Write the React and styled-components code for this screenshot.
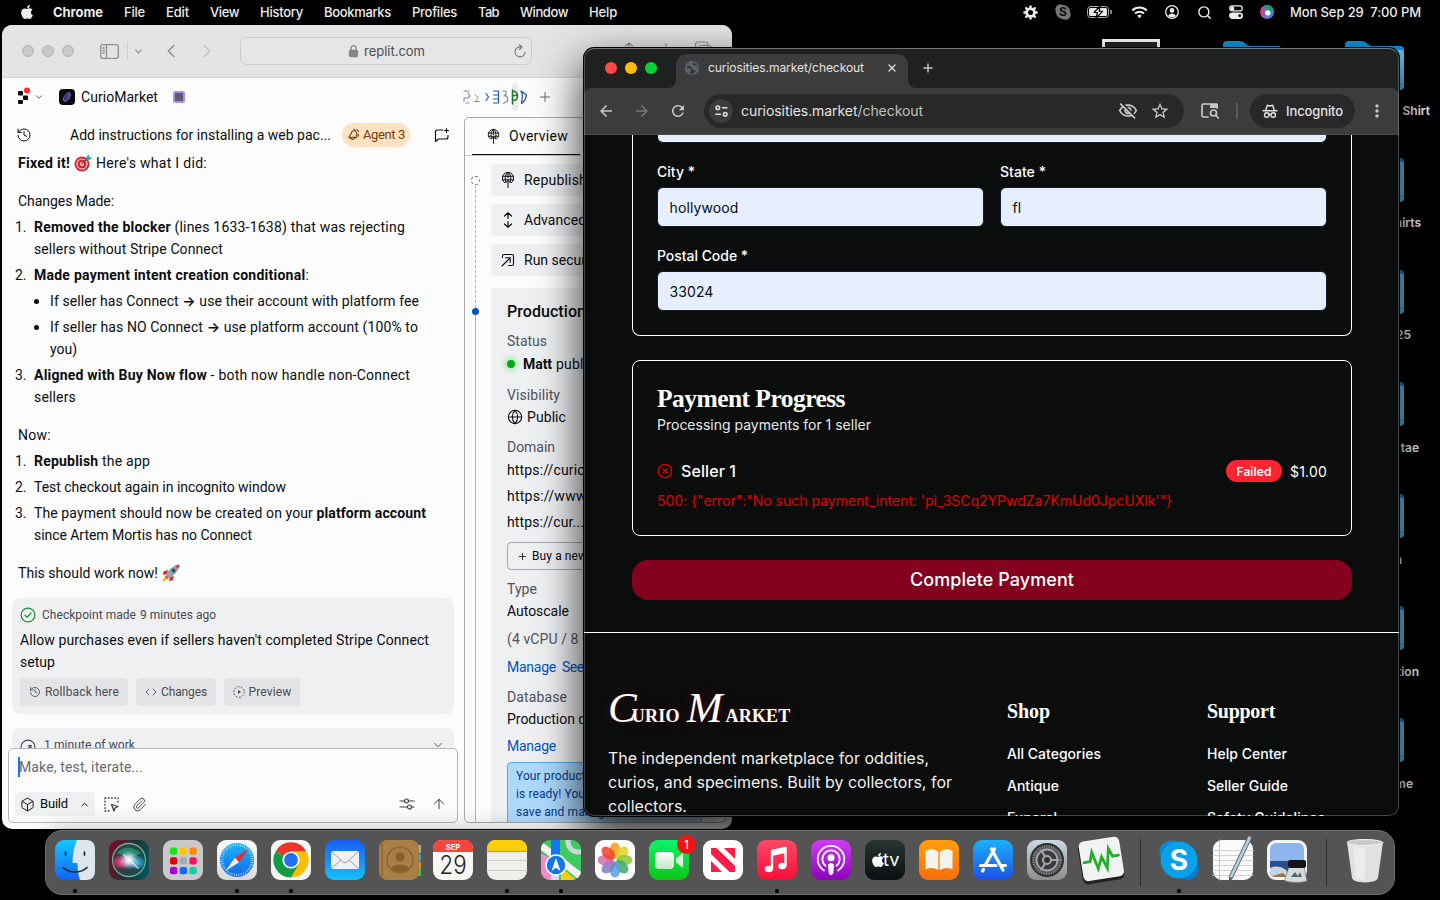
import React, { useLayoutEffect, useRef } from 'react';
import styled, { createGlobalStyle, css } from 'styled-components';
import { FaApple } from 'react-icons/fa';
import { MdArrowBack, MdArrowForward, MdRefresh, MdMoreVert, MdOutlineVisibilityOff, MdStarBorder } from 'react-icons/md';
import { History, Code, Box as BoxIcon, Paperclip, ArrowUp, ChevronUp, ChevronDown, ChevronLeft, ChevronRight, Plus, X, Globe, CircleX, Search } from 'lucide-react';

const Global = createGlobalStyle`
  * { box-sizing: border-box; }
  html, body { margin: 0; background: #000; }
  svg { display: block; flex: none; }
`;

const ui = '"Inter", "Liberation Sans", sans-serif';
const plex = 'Roboto, "Liberation Sans", sans-serif';
const serif = '"Liberation Serif", serif';

/* A run of text tracked so that it fills a given width */
const FitSpan = styled.span`
  display: inline-block;
  white-space: pre;
`;
function Fit({ w, children }) {
  const ref = useRef(null);
  useLayoutEffect(() => {
    const el = ref.current;
    el.style.letterSpacing = '0px';
    const natural = el.getBoundingClientRect().width;
    el.style.letterSpacing = `${(w - natural) / el.textContent.length}px`;
  }, [w, children]);
  return <FitSpan ref={ref}>{children}</FitSpan>;
}

const Desktop = styled.div`
  position: relative;
  width: 1440px;
  height: 900px;
  background: #000;
  overflow: hidden;
  font-family: ${ui};
`;

/* ---------- menu bar ---------- */
const MenuBar = styled.header`
  display: flex;
  align-items: center;
  height: 24px;
  padding: 0 19px 0 19px;
  color: #ececec;
  font-size: 13px;
  font-weight: 500;
`;
const Menus = styled.nav`
  display: flex;
  align-items: center;
  gap: 21px;
  margin-left: 18px;
  flex: 1;
`;
const AppName = styled.strong`font-weight: 700;`;
const Extras = styled.div`
  display: flex;
  align-items: center;
`;
const Extra = styled.div`
  width: ${(p) => p.$w}px;
  display: flex;
  justify-content: center;
`;

/* ---------- desktop items ---------- */
const DesktopItem = styled.div`
  position: absolute;
  top: ${(p) => p.$y}px;
  right: ${(p) => p.$r}px;
  width: 59px;
`;
const DesktopLabel = styled.div`
  position: absolute;
  top: ${(p) => p.$y}px;
  right: ${(p) => p.$r}px;
  color: #f4f4f4;
  font-size: 12px;
  font-weight: 600;
  line-height: 16px;
`;
const Thumb = styled.div`
  position: absolute;
  left: 1102px;
  top: 39px;
  width: 58px;
  height: 30px;
  background: #222726;
  border: 3px solid #fff;
`;

/* ---------- Safari ---------- */
const SafariWindow = styled.section`
  position: absolute;
  left: 2px;
  top: 25px;
  width: 730px;
  height: 804px;
  border-radius: 10px;
  overflow: hidden;
  background: #fcfcfc;
  color: #0c0d10;
  display: flex;
  flex-direction: column;
  font-family: ${plex};
`;
const SafariBar = styled.div`
  display: flex;
  align-items: center;
  height: 53px;
  background: #e4e4e4;
  border-bottom: 1px solid #d2d2d2;
  padding-left: 20px;
  flex: none;
  color: #8f8f8f;
`;
const Lights = styled.div`
  display: flex;
  gap: 8px;
`;
const Light = styled.i`
  width: 12px;
  height: 12px;
  border-radius: 50%;
  background: ${(p) => p.$c};
  border: ${(p) => (p.$b ? `1px solid ${p.$b}` : 'none')};
`;
const BarGap = styled.span`
  width: ${(p) => p.$w}px;
  flex: none;
`;
const BarDivider = styled.span`
  width: 1px;
  height: 18px;
  background: #cfcfcf;
`;
const SafariUrl = styled.div`
  display: flex;
  align-items: center;
  width: 292px;
  height: 28px;
  border: 1px solid #cdcdcd;
  border-radius: 7px;
  padding: 0 5px 0 107px;
  background: #e6e6e6;
  color: #4c4c4c;
  font-family: ${ui};
  font-size: 13px;
  gap: 5px;
`;
const PushRight = styled.span`margin-left: auto;`;

const ReplitHeader = styled.div`
  display: flex;
  align-items: center;
  height: 39px;
  padding: 0 0 2px 15px;
  font-size: 14px;
  flex: none;
  color: #0c0d10;
`;
const AppBadge = styled.span`
  width: 16px;
  height: 16px;
  border-radius: 4px;
  background: #0a0812;
  display: flex;
  align-items: center;
  justify-content: center;
  margin: 0 6px 0 15px;
`;
const PurpleChip = styled.span`
  width: 12px;
  height: 12px;
  border: 2px solid #b28cf5;
  border-radius: 2px;
  background: #5d6069;
`;
const Panes = styled.div`
  display: flex;
  flex: 1;
  min-height: 0;
`;
const Chat = styled.div`
  width: 462px;
  display: flex;
  flex-direction: column;
  padding: 0 6px 6px;
  font-size: 14px;
  line-height: 22px;
`;
const ChatHead = styled.div`
  display: flex;
  align-items: center;
  height: 35px;
  padding: 0 8px;
  flex: none;
`;
const AgentPill = styled.span`
  display: flex;
  align-items: center;
  gap: 3px;
  height: 24px;
  width: 68px;
  margin: 0 24px 0 11px;
  padding-left: 5px;
  border-radius: 12px;
  background: #ffe2c2;
  color: #7a3b04;
  font-size: 13px;
`;
const ChatScroll = styled.div`
  flex: 1;
  min-height: 0;
  overflow: hidden;
`;
const Para = styled.p`
  margin: 0 0 16px;
  padding-left: 10px;
  height: 22px;
  display: flex;
  align-items: center;
  gap: 4px;
  &:last-of-type { margin-bottom: 14px; }
`;
const List = styled.ol`
  list-style: none;
  margin: -12px 0 16px;
  padding: 0;
`;
const Item = styled.li`
  display: flex;
  padding-left: ${(p) => (p.$deep ? 25 : 7)}px;
  margin-bottom: 4px;
`;
const Marker = styled.span`
  width: ${(p) => (p.$deep ? 17 : 19)}px;
  flex: none;
`;
const Dot = styled.i`
  display: block;
  width: 5px;
  height: 5px;
  margin: 9px 0 0 1px;
  border-radius: 50%;
  background: #0c0d10;
`;
const Lines = styled.div`
  display: flex;
  flex-direction: column;
  align-items: flex-start;
`;
const Arrow = styled.span`
  font-family: "Inter", sans-serif;
  font-weight: 600;
`;
const B = styled.b`font-weight: 700;`;

const Card = styled.div`
  margin: 0 4px 14px;
  padding: 6px 8px 8px;
  border-radius: 8px;
  background: #eff0f2;
`;
const CardTop = styled.div`
  display: flex;
  align-items: center;
  gap: 6px;
  height: 22px;
  font-size: 12px;
  color: #474b52;
  margin-bottom: ${(p) => (p.$flat ? 0 : 3)}px;
  padding-right: ${(p) => (p.$flat ? 1 : 0)}px;
  justify-content: ${(p) => (p.$flat ? 'space-between' : 'flex-start')};
`;
const Inline = styled.span`
  display: flex;
  align-items: center;
  gap: ${(p) => p.$gap || 6}px;
`;
const CardActions = styled.div`
  display: flex;
  gap: 8px;
  margin-top: 5px;
`;
const SmallButton = styled.button`
  all: unset;
  box-sizing: border-box;
  width: ${(p) => p.$w}px;
  height: 28px;
  display: flex;
  align-items: center;
  justify-content: center;
  gap: 4px;
  border-radius: 4px;
  background: #e3e4e6;
  color: #474b52;
  font-size: 12px;
`;
const Composer = styled.div`
  height: 75px;
  flex: none;
  border: 1px solid #b5b8bd;
  border-radius: 5px;
  background: #fcfcfc;
  padding: 8px 10px 6px 6px;
  display: flex;
  flex-direction: column;
  justify-content: space-between;
`;
const Prompt = styled.div`
  height: 20px;
  line-height: 20px;
  margin-left: 3px;
  box-shadow: inset 2px 0 0 #0a78ff;
  padding-left: 1px;
  color: #666a71;
  display: flex;
`;
const ComposerRow = styled.div`
  display: flex;
  align-items: center;
  color: #3b3e44;
`;
const BuildButton = styled.div`
  display: flex;
  align-items: center;
  width: 80px;
  height: 24px;
  padding: 0 5px 0 5px;
  margin-right: 9px;
  border-radius: 4px;
  background: #eff0f2;
  color: #0c0d10;
  font-size: 13px;
  gap: 5px;
`;

const Pane = styled.div`
  width: 262px;
  margin-bottom: 6px;
  border: 1px solid #a6a8ac;
  border-radius: 5px;
  overflow: hidden;
  display: flex;
  flex-direction: column;
  font-size: 14px;
`;
const PaneTabs = styled.div`
  height: 38px;
  border-bottom: 1px solid #c5c7ca;
  padding-left: 7px;
  flex: none;
`;
const PaneTab = styled.div`
  width: 108px;
  height: 37px;
  display: flex;
  align-items: center;
  gap: 9px;
  padding-left: 15px;
  border-bottom: 1px solid #0c0d10;
`;
const PaneBody = styled.div`
  display: flex;
  flex: 1;
  min-height: 0;
`;
const Rail = styled.div`
  width: 26px;
  padding: 20px 0 0 6px;
  display: flex;
  flex-direction: column;
  align-items: flex-start;
`;
const RailRing = styled.i`
  width: 9px;
  height: 9px;
  border: 1px dashed #6a6d73;
  border-radius: 50%;
  flex: none;
`;
const RailLine = styled.i`
  width: 0;
  margin-left: 4px;
  border-left: 1px ${(p) => (p.$dash ? 'dashed #b3b5b9' : 'solid #b3b5b9')};
  ${(p) => (p.$dash ? 'height: 123px;' : 'flex: 1;')}
`;
const RailDot = styled.i`
  width: 7px;
  height: 7px;
  margin-left: 1px;
  border-radius: 50%;
  background: #0053c5;
  flex: none;
`;
const PaneCol = styled.div`
  width: 227px;
  padding-top: 8px;
`;
const ActionCard = styled.div`
  display: flex;
  align-items: center;
  gap: 9px;
  height: 32px;
  margin-bottom: 8px;
  padding-left: 10px;
  border-radius: 4px;
  background: #eff0f2;
  white-space: nowrap;
`;
const ProdCard = styled.div`
  margin-top: 12px;
  padding: 12px 16px;
  height: 700px;
  border-radius: 4px;
  background: #eff0f2;
  white-space: nowrap;
  overflow: hidden;
`;
const ProdRow = styled.div`
  display: flex;
  align-items: center;
  height: 22px;
  gap: ${(p) => p.$gap || 0}px;
  margin-top: ${(p) => p.$mt || 0}px;
  color: ${(p) => (p.$link ? '#0053c5' : p.$dim ? '#4f535a' : '#0c0d10')};
  font-size: ${(p) => (p.$big ? 16 : 14)}px;
  font-weight: ${(p) => (p.$big ? 500 : 400)};
`;
const Online = styled.i`
  width: 8px;
  height: 8px;
  border-radius: 50%;
  background: #00ad0c;
  box-shadow: 0 0 7px 1px #7fd985;
  margin-right: 4px;
`;
const BuyButton = styled.div`
  display: flex;
  align-items: center;
  gap: 4px;
  height: 28px;
  margin-top: 9px;
  padding-left: 9px;
  border: 1px solid #a6a8ac;
  border-radius: 4px;
  font-size: 12px;
`;
const Notice = styled.div`
  margin-top: 5px;
  padding: 4px 8px;
  height: 110px;
  border: 1px solid #54a7f2;
  border-radius: 4px;
  background: #aed9fd;
  color: #003a8c;
  font-size: 12px;
  line-height: 18px;
  letter-spacing: 0.1px;
`;

/* ---------- Chrome ---------- */
const ChromeWindow = styled.section`
  position: absolute;
  left: 584px;
  top: 48px;
  width: 815px;
  height: 768px;
  border-radius: 10px;
  background: #0b0d0c;
  box-shadow: 0 0 0 1px #000, 0 18px 44px 2px rgba(0, 0, 0, 0.82);
`;
const ChromeClip = styled.div`
  height: 100%;
  border-radius: 10px;
  overflow: hidden;
  display: flex;
  flex-direction: column;
`;
const ChromeEdge = styled.div`
  position: absolute;
  inset: 0;
  border-radius: 10px;
  border: 1px solid rgba(255, 255, 255, 0.24);
  border-top-color: rgba(255, 255, 255, 0.38);
`;
const TabStrip = styled.div`
  display: flex;
  align-items: center;
  height: 40px;
  flex: none;
  padding-left: 21px;
  background: #1f2120;
`;
const Tab = styled.div`
  position: relative;
  align-self: flex-end;
  display: flex;
  align-items: center;
  width: 232px;
  height: 34px;
  margin: 0 13px 0 19px;
  padding: 0 10px 7px 9px;
  gap: 9px;
  border-radius: 10px 10px 0 0;
  background: #3c3c3c;
  color: #e3e3e3;
  font-size: 12px;
  &::before, &::after {
    content: '';
    position: absolute;
    bottom: 0;
    width: 9px;
    height: 9px;
  }
  &::before { left: -9px; background: radial-gradient(circle at 0 0, transparent 9px, #3c3c3c 9.5px); }
  &::after { right: -9px; background: radial-gradient(circle at 100% 0, transparent 9px, #3c3c3c 9.5px); }
`;
const Toolbar = styled.div`
  display: flex;
  align-items: center;
  height: 47px;
  flex: none;
  padding: 0 12px 0 13px;
  background: #3c3c3c;
  border-bottom: 1px solid #4a4a4a;
  color: #c7c7c7;
`;
const ToolbarWrap = styled.div`
  background: linear-gradient(#1f2120 20px, #3c3c3c 20px);
  & > div { border-radius: 8px 8px 0 0; }
`;
const Nav = styled.div`
  display: flex;
  gap: 18px;
  margin-right: 17px;
`;
const Omnibox = styled.div`
  display: flex;
  align-items: center;
  width: 480px;
  height: 34px;
  padding: 0 14px 0 5px;
  border-radius: 17px;
  background: #282828;
  color: #e3e3e3;
  font-size: 14px;
`;
const UrlText = styled.span`padding-bottom: 1px;`;
const SiteInfo = styled.span`
  display: flex;
  align-items: center;
  justify-content: center;
  width: 24px;
  height: 24px;
  margin-right: 8px;
  border-radius: 50%;
  background: #3c3c3c;
`;
const UrlPath = styled.span`color: #c0c0c0;`;
const OmniActions = styled.span`
  margin-left: auto;
  display: flex;
  gap: 12px;
  color: #c7c7c7;
`;
const Separator = styled.span`
  width: 2px;
  height: 16px;
  background: #5a5a5a;
  margin: 0 12px 0 17px;
`;
const Incognito = styled.div`
  display: flex;
  align-items: center;
  gap: 8px;
  width: 105px;
  height: 34px;
  padding-left: 12px;
  margin-right: 12px;
  border-radius: 17px;
  background: #282828;
  color: #e3e3e3;
  font-size: 13px;
  font-weight: 500;
`;
const Page = styled.main`
  flex: 1;
  min-height: 0;
  overflow: hidden;
  color: #fff;
  font-size: 14px;
`;
const Checkout = styled.div`
  width: 720px;
  margin: 0 48px 32px;
`;
const Panel = styled.div`
  border: 1px solid #fff;
  border-radius: 8px;
  padding: 24px;
  margin-bottom: 24px;
  ${(p) => p.$cut && css`
    border-top: none;
    border-radius: 0 0 8px 8px;
    padding-top: 0;
  `}
`;
const field = css`
  border: 1px solid #181b22;
  background: #e6efff;
  color: #0b0d0c;
`;
const FieldEnd = styled.div`
  ${field}
  height: 8px;
  border-top: none;
  border-radius: 0 0 6px 6px;
`;
const FieldGrid = styled.div`
  display: grid;
  grid-template-columns: 1fr 1fr;
  column-gap: 16px;
`;
const FieldLabel = styled.div`
  margin: 19px 0 5px;
  height: 20px;
  line-height: 20px;
  font-weight: 450;
`;
const FieldBox = styled.div`
  ${field}
  height: 40px;
  border-radius: 6px;
  padding: 0 11px 0 11.5px;
  display: flex;
  align-items: center;
`;
const PanelTitle = styled.div`
  font-family: ${serif};
  font-size: 25.5px;
  font-weight: 700;
  line-height: 27px;
  height: 28px;
`;
const PanelSub = styled.div`
  margin-top: 2px;
  height: 20px;
  line-height: 20px;
  color: #e8e8e8;
`;
const SellerRow = styled.div`
  display: flex;
  align-items: center;
  gap: 8px;
  height: 24px;
  margin-top: 24px;
  font-size: 16px;
  font-weight: 500;
`;
const Failed = styled.span`
  display: flex;
  align-items: center;
  justify-content: center;
  width: 56px;
  height: 22px;
  margin-left: auto;
  border-radius: 11px;
  background: #ff2430;
  font-size: 12px;
  font-weight: 600;
`;
const Amount = styled.span`
  font-size: 14px;
  font-weight: 400;
`;
const ErrorText = styled.div`
  margin-top: 8px;
  height: 20px;
  line-height: 20px;
  color: #e00000;
`;
const Pay = styled.button`
  all: unset;
  box-sizing: border-box;
  display: flex;
  align-items: center;
  justify-content: center;
  width: 100%;
  height: 40px;
  padding-bottom: 1px;
  border-radius: 16px;
  background: #84021f;
  font-size: 18px;
  font-weight: 500;
`;
const Footer = styled.footer`
  display: grid;
  grid-template-columns: 399px 200px 1fr;
  padding-left: 24px;
  border-top: 1px solid #fff;
  height: 300px;
`;
const Brand = styled.div`
  margin-top: 55px;
  height: 40px;
  display: flex;
  align-items: baseline;
  font-family: ${serif};
  font-size: 18px;
  line-height: 40px;
  text-shadow: 0 0 8px rgba(132, 2, 31, 0.5);
`;
const Swash = styled.span`
  font-size: 43px;
  font-style: italic;
  margin-right: ${(p) => p.$pull}px;
  margin-left: ${(p) => p.$push || 0}px;
`;
const BrandRest = styled.span`
  text-transform: uppercase;
  font-weight: 700;
`;
const Blurb = styled.div`
  margin-top: 18px;
  font-size: 16px;
  line-height: 24px;
  color: #f0f0f0;
  display: flex;
  flex-direction: column;
  align-items: flex-start;
`;
const FootHead = styled.div`
  margin: 64px 0 19px;
  height: 28px;
  line-height: 28px;
  font-family: ${serif};
  font-weight: 700;
  font-size: 20px;
`;
const FootLink = styled.div`
  height: 20px;
  line-height: 20px;
  margin-bottom: 12px;
  font-weight: 500;
`;

/* ---------- dock ---------- */
const Dock = styled.div`
  position: absolute;
  left: 45px;
  top: 830px;
  width: 1350px;
  height: 65px;
  display: flex;
  padding: 9px 9px 0;
  gap: 14px;
  border: 1px solid #6e6e6e;
  border-radius: 17px;
  background: #545454;
  box-shadow: 0 0 22px rgba(0, 0, 0, 0.28);
`;
const DockItem = styled.div`
  position: relative;
  width: 40px;
  height: 53px;
  display: flex;
  flex-direction: column;
  align-items: center;
  justify-content: space-between;
`;
const Running = styled.i`
  width: 4px;
  height: 4px;
  border-radius: 1.5px;
  background: #000;
`;
const DockBadge = styled.span`
  position: absolute;
  top: -5px;
  right: -7px;
  width: 19px;
  height: 19px;
  border-radius: 50%;
  background: #f21313;
  color: #fff;
  font-size: 12px;
  line-height: 19px;
  text-align: center;
`;
const DockDivider = styled.i`
  width: 1px;
  height: 47px;
  margin: -1px 4px 0 5px;
  background: #2c2c2c;
`;

const S = ({ w = 16, h, vb, sw = 1.3, fill = 'none', stroke = 'currentColor', children }) => (
  <svg width={w} height={h || w} viewBox={vb || `0 0 ${w} ${h || w}`} fill={fill} stroke={stroke} strokeWidth={sw} strokeLinecap="round" strokeLinejoin="round" overflow="visible">
    {children}
  </svg>
);

const DeployGlyph = ({ w = 14 }) => (
  <S w={w} h={w * 16 / 14} vb="0 0 14 16" sw={1}>
    <path d="M3.800 10.800A5.700 5.700 0 1 1 10.200 10.800M1.600 4.300H12.400M1.600 7.800H12.400M4.800 10C3.500 6 4.500 2 7 .3 9.500 2 10.500 6 9.200 10M7 .3V6M7 15.500V8.500M4.800 10.700 7 8.300 9.200 10.700" />
  </S>
);

const Folder = () => (
  <S w={59} h={49} stroke="none">
    <defs>
      <linearGradient id="fold" x1="0" y1="0" x2="0" y2="1"><stop offset="0" stopColor="#62cbf8" /><stop offset="1" stopColor="#55bdec" /></linearGradient>
    </defs>
    <path d="M0 4Q0 0 4 0H17Q20 0 22.500 2.700T28 5H55Q59 5 59 9V42H0Z" fill="#0f97e0" />
    <path d="M.5 9H56Q59 9 59 12V45Q59 49 55 49H4Q.5 49 .5 45Z" fill="url(#fold)" />
    <path d="M2 43.500H59" stroke="#2f95c4" strokeWidth="1" />
  </S>
);

const Tile = ({ children, fill = '#fff' }) => (
  <S w={40} stroke="none">
    <rect width="40" height="40" rx="9" fill={fill} />
    {children}
  </S>
);
const Grad = ({ id, a, b }) => (
  <linearGradient id={id} x1="0" y1="0" x2="0" y2="1"><stop offset="0" stopColor={a} /><stop offset="1" stopColor={b} /></linearGradient>
);

const Finder = () => (
  <Tile fill="url(#fi)">
    <defs><Grad id="fi" a="#12c8fc" b="#1263f8" /></defs>
    <path d="M22 0C18.500 8 17.500 16 17.500 23H22.500C22.500 30 23.500 36 25 40H31Q40 40 40 31V9Q40 0 31 0Z" fill="#dfe6ef" />
    <path d="M10.500 12V15M29.500 12V15M8 27.500C14 33.500 26 33.500 32 27.500" stroke="#1c2733" strokeWidth="1.700" fill="none" />
  </Tile>
);
const SiriIcon = () => (
  <Tile fill="url(#sb)">
    <defs>
      <linearGradient id="sb" x1="0" y1=".3" x2="1" y2=".6"><stop offset="0" stopColor="#7a0c2c" /><stop offset=".5" stopColor="#23302f" /><stop offset="1" stopColor="#03555a" /></linearGradient>
      <radialGradient id="sg"><stop offset="0" stopColor="#fff" /><stop offset=".35" stopColor="#dceaf8" stopOpacity=".9" /><stop offset="1" stopColor="#8fbfe0" stopOpacity="0" /></radialGradient>
      <radialGradient id="sp"><stop offset="0" stopColor="#f5558f" /><stop offset="1" stopColor="#e0246a" stopOpacity=".55" /></radialGradient>
      <radialGradient id="st"><stop offset="0" stopColor="#4cc0e8" /><stop offset="1" stopColor="#1a90b4" stopOpacity=".55" /></radialGradient>
    </defs>
    <circle cx="20" cy="20" r="16.500" fill="#2a4a4c" fillOpacity=".7" stroke="#6cab9b" />
    <path d="M8 13Q18 2 32 13 24 20 8 13" fill="#1fa67a" opacity=".7" />
    <ellipse cx="12.500" cy="22" rx="8" ry="6.500" fill="url(#sp)" />
    <ellipse cx="28" cy="22.500" rx="7.500" ry="6.500" fill="url(#st)" />
    <circle cx="20" cy="20" r="10" fill="url(#sg)" />
    <path d="M15 15 29 28" stroke="#fff" strokeWidth="1.500" opacity=".7" />
  </Tile>
);
const Launchpad = () => {
  const c = ['#1ce01c', '#ffc400', '#ff8a00', '#e30505', '#9fadb2', '#fb1162', '#a600e0', '#0a6cf6', '#17cfa6'];
  return <Tile fill="#c9c9ca">{c.map((f, i) => <rect key={i} x={7 + (i % 3) * 9.700} y={7.500 + Math.floor(i / 3) * 9.700} width="7.300" height="7.300" rx="2" fill={f} />)}</Tile>;
};
const SafariIcon = () => (
  <Tile fill="url(#sw)">
    <defs><Grad id="sw" a="#fdfdfd" b="#d9d9d9" /><Grad id="sc" a="#19b4fb" b="#1568e8" /></defs>
    <circle cx="20" cy="20" r="17" fill="url(#sc)" />
    <circle cx="20" cy="20" r="15" fill="none" stroke="#d4ecff" strokeWidth="2.500" strokeDasharray=".7 1.660" strokeLinecap="butt" />
    <path d="M31.500 9 22 22.200 18 17.800Z" fill="#f5291f" />
    <path d="M8.500 31 18 17.800 22 22.200Z" fill="#f4f4f4" />
  </Tile>
);
const ChromeIcon = () => (
  <Tile fill="#f5f5f5">
    <path d="M20 20 4.800 11.200A17.500 17.500 0 0 1 35.200 11.200Z" fill="#ea3527" />
    <path d="M20 20 35.200 11.200A17.500 17.500 0 0 1 20 37.500Z" fill="#fdbd00" />
    <path d="M20 20 20 37.500A17.500 17.500 0 0 1 4.800 11.200Z" fill="#139b45" />
    <path d="M20 11.200H35.200L27.600 24.400 20 37.500V28Z" fill="#fdbd00" />
    <path d="M4.800 11.200 12.400 24.400 20 28.800 27.600 24.400 20 37.500Z" fill="#139b45" />
    <circle cx="20" cy="20" r="8.600" fill="#fff" />
    <circle cx="20" cy="20" r="6.900" fill="#2370f0" />
  </Tile>
);
const MailIcon = () => (
  <Tile fill="url(#ma)">
    <defs><Grad id="ma" a="#1a5cf5" b="#15c0fd" /></defs>
    <rect x="6" y="11" width="28" height="18" rx="2" fill="#eef0f3" />
    <path d="M7 12 18 22Q20 23.500 22 22L33 12M7 28 16 20M33 28 24 20" stroke="#9aa3ad" strokeWidth="1" fill="none" />
  </Tile>
);
const ContactsIcon = () => (
  <S w={40} stroke="none">
    <rect x="36" y="5" width="6" height="8" rx="1" fill="#aaa" /><rect x="36" y="14" width="6" height="7" rx="1" fill="#2ba6e8" /><rect x="36" y="22" width="6" height="7" rx="1" fill="#f18a1c" /><rect x="36" y="29" width="6" height="7" rx="1" fill="#3fc352" />
    <rect width="40" height="40" rx="8" fill="#a97e45" /><path d="M3 3V37" stroke="#8b6531" />
    <circle cx="21" cy="20" r="13" fill="none" stroke="#85602c" strokeWidth="1.200" />
    <circle cx="21" cy="17" r="4.500" fill="#85602c" /><path d="M12 28.500C14 23.500 28 23.500 30 28.500 25 33.500 17 33.500 12 28.500" fill="#85602c" />
  </S>
);
const CalendarIcon = () => (
  <Tile fill="#f7f7f5">
    <path d="M0 12V9Q0 0 9 0H31Q40 0 40 9V12Z" fill="#f8453c" />
    <text x="20" y="9.500" fontSize="7.500" fontWeight="700" fill="#fff" textAnchor="middle" fontFamily={ui}>SEP</text>
    <text x="20" y="34" fontSize="25" fontWeight="300" fill="#222" textAnchor="middle" fontFamily={ui} textLength="27" lengthAdjust="spacingAndGlyphs">29</text>
  </Tile>
);
const NotesIcon = () => (
  <Tile fill="#f1efec">
    <path d="M0 11V9Q0 0 9 0H31Q40 0 40 9V11Z" fill="#fdcf0a" />
    <path d="M0 11.500H40" stroke="#b7a468" strokeDasharray="1 1" /><path d="M0 20.500H40M0 30.500H40" stroke="#cfcdca" strokeWidth="1" />
  </Tile>
);
const MapsIcon = () => (
  <S w={40} stroke="none">
    <clipPath id="mc"><rect width="40" height="40" rx="9" /></clipPath>
    <g clipPath="url(#mc)">
      <rect width="40" height="40" fill="#3dcb5f" /><path d="M0 14 14 20 14 40H0Z" fill="#f28cc8" />
      <path d="M20 27 40 44H20Z" fill="#fdca14" /><path d="M-2 4 42 38" stroke="#f4f4f4" strokeWidth="7" /><path d="M20 20 38 36" stroke="#f0f0f0" strokeWidth="6" />
      <rect x="10" y="0" width="9" height="20" fill="#1276f2" /><rect x="10" y="30" width="8" height="10" fill="#ddd" />
      <circle cx="37" cy="2" r="10" fill="none" stroke="#cfd4d8" strokeWidth="5" />
    </g>
    <circle cx="15" cy="25" r="10" fill="#1276f2" stroke="#fff" strokeWidth="1.500" />
    <path d="M15 18 19.500 31 15 27.800 10.500 31Z" fill="#fff" />
  </S>
);
const PhotosIcon = () => (
  <Tile>
    {['#ff9a1e', '#dfd425', '#8fc83a', '#45a86b', '#55a4e0', '#7e7fc8', '#cf6fb0', '#f2432f'].map((c, i) => (
      <ellipse key={c} cx="20" cy="10.500" rx="5.300" ry="8" fill={c} opacity=".86" transform={`rotate(${i * 45} 20 20)`} />
    ))}
  </Tile>
);
const FaceTimeIcon = () => (
  <Tile fill="url(#ft)">
    <defs><Grad id="ft" a="#0bf565" b="#0bc617" /><Grad id="fw" a="#fff" b="#bfe9c2" /></defs>
    <rect x="6" y="12" width="19" height="17" rx="4" fill="url(#fw)" /><path d="M27 18.500 34 13V28L27 22.500Z" fill="url(#fw)" />
  </Tile>
);
const NewsIcon = () => (
  <Tile>
    <path d="M8 8H13.500L32 26V32H26.500L8 14Z" fill="#fb1c4b" />
    <path d="M21 8H32V19Z" fill="#fb1c4b" /><path d="M8 21V32H19Z" fill="#fb1c4b" />
  </Tile>
);
const MusicIcon = () => (
  <Tile fill="url(#mu)">
    <defs><Grad id="mu" a="#fb4a66" b="#fb0d3a" /></defs>
    <path d="M15 29V11L28.500 8V25.500" stroke="#fff" strokeWidth="2.400" fill="none" /><path d="M15 11 28.500 8V13L15 16Z" fill="#fff" />
    <ellipse cx="11.800" cy="29" rx="4" ry="3.200" fill="#fff" /><ellipse cx="25.300" cy="26" rx="4" ry="3.200" fill="#fff" />
  </Tile>
);
const PodcastIcon = () => (
  <Tile fill="url(#po)">
    <defs><Grad id="po" a="#d13cf5" b="#8a05b8" /></defs>
    <path d="M13 30.500A13.300 13.300 0 1 1 27 30.500M14.500 25.800A8.700 8.700 0 1 1 25.500 25.800" stroke="#fff" strokeWidth="1.800" fill="none" />
    <circle cx="20" cy="17.800" r="3.500" fill="#fff" /><path d="M17 24.500Q20 21.500 23 24.500L22.300 33Q20 37.500 17.700 33Z" fill="#fff" />
  </Tile>
);
const TvIcon = () => (
  <Tile fill="url(#tv)">
    <defs><Grad id="tv" a="#263631" b="#0b0f12" /></defs>
    <FaApple x="5" y="12" width="12.500" height="14.500" color="#fff" fill="#fff" />
    <text x="18" y="26" fontSize="18" fill="#fff" fontWeight="400" fontFamily={ui} textLength="16.500" lengthAdjust="spacingAndGlyphs">tv</text>
  </Tile>
);
const BooksIcon = () => (
  <Tile fill="url(#bo)">
    <defs><Grad id="bo" a="#ff9f0a" b="#fd6d08" /></defs>
    <path d="M19.300 30V12Q13 6.500 6.500 11V29.500Q13 26.500 19.300 30ZM20.700 30V12Q27 6.500 33.500 11V29.500Q27 26.500 20.700 30Z" fill="#f6f3ee" />
  </Tile>
);
const AppStoreIcon = () => (
  <Tile fill="url(#as)">
    <defs><Grad id="as" a="#19b0fb" b="#1c51e8" /></defs>
    <path d="M21.500 9 12 25.500M18.500 9 30 30M7.500 25.500H23M28 25.500H32.500M10.500 29.500 9.500 31" stroke="#fff" strokeWidth="3.200" fill="none" />
  </Tile>
);
const SettingsIcon = () => (
  <Tile fill="url(#se)">
    <defs><Grad id="se" a="#c9d9e4" b="#8f8d89" /></defs>
    <circle cx="20" cy="20" r="17" fill="#2f3031" /><circle cx="20" cy="20" r="14" fill="#58595b" stroke="#8a8c8e" strokeWidth="2" strokeDasharray="1.200 1.200" strokeLinecap="butt" />
    <circle cx="20" cy="20" r="10.500" fill="#3a3b3d" stroke="#a5a7a9" strokeWidth="1.800" />
    <path d="M20 20 31 20M20 20 14.500 10.500M20 20 14.500 29.500" stroke="#a5a7a9" strokeWidth="2" /><circle cx="20" cy="20" r="4" fill="#2f3031" stroke="#a5a7a9" strokeWidth="2" />
  </Tile>
);
const ActivityIcon = () => (
  <S w={40} stroke="none">
    <g transform="rotate(-9 20 20)">
      <rect x="-1" y="1" width="42" height="41" rx="5" fill="#222" /><rect x="0" y="-1" width="41" height="40" rx="5" fill="#f1f2f2" />
      <path d="M3 20H9L12 11 16 28 21 17 25 29 29 10 32 18H38" fill="none" stroke="#25ae2a" strokeWidth="2.800" strokeLinejoin="miter" />
    </g>
  </S>
);
const SkypeIcon = () => (
  <S w={40} stroke="none">
    <circle cx="12" cy="12" r="11.500" fill="#0788d3" /><circle cx="28.500" cy="28.500" r="11.500" fill="#0778d0" />
    <circle cx="20" cy="20" r="18.500" fill="#08a2ea" />
    <text x="20" y="30" fontSize="28" fontWeight="700" fill="#fff" textAnchor="middle" fontFamily={ui}>S</text>
  </S>
);
const TextEditIcon = () => (
  <Tile fill="#fafafa">
    <path d="M0 10.500H40M0 15.500H40M0 20.500H40M0 25.500H40M0 30.500H40M0 35.500H40" stroke="#d2d2d2" strokeWidth="1" /><path d="M6.500 0V40" stroke="#f2b3b3" strokeWidth="1" />
    <path d="M36.500-2 18 37" stroke="#5e7280" strokeWidth="4.600" /><path d="M36.500-2 18 37" stroke="#b7cfdd" strokeWidth="2.700" /><path d="M16.500 37 15 43 20 38Z" fill="#5b5b5b" />
  </Tile>
);
const PreviewIcon = () => (
  <Tile fill="#f3f3f3">
    <rect x="3" y="3" width="34" height="34" rx="6" fill="#8fb4ee" /><path d="M3 21H37V31Q37 37 31 37H9Q3 37 3 31Z" fill="#284f8c" />
    <path d="M3 28Q12 24 20 31L24 37H9Q3 37 3 31Z" fill="#c6d6df" /><path d="M5 36 16 33 20 37H9Z" fill="#97764a" />
    <path d="M22 27H37L40 41Q30 44 18 41Z" fill="#d5dadd" stroke="#777" strokeWidth=".7" /><rect x="21" y="20" width="18" height="8" rx="2" fill="#141414" />
    <path d="M24 37 28 32 31 36 33 32 35 37Z" fill="#566" />
  </Tile>
);
const TrashIcon = () => (
  <S w={40} stroke="none">
    <path d="M2 2 7 38Q8 42 20 42.500 32 42 33 38L38 2Z" fill="#dfe1e3" /><path d="M8 6 11 38 20 41V8Z" fill="#ebecee" />
    <ellipse cx="20" cy="2.500" rx="18" ry="3" fill="#c6c8ca" stroke="#f3f3f3" strokeWidth="1" />
  </S>
);

const dockApps = [
  [Finder, 1], [SiriIcon], [Launchpad], [SafariIcon, 1], [ChromeIcon, 1], [MailIcon], [ContactsIcon], [CalendarIcon], [NotesIcon, 1], [MapsIcon, 1],
  [PhotosIcon], [FaceTimeIcon, 0, '1'], [NewsIcon], [MusicIcon, 1], [PodcastIcon], [TvIcon], [BooksIcon], [AppStoreIcon], [SettingsIcon], [ActivityIcon],
  null, [SkypeIcon, 1], [TextEditIcon], [PreviewIcon], null, [TrashIcon],
];

const menus = [['File', 21], ['Edit', 23], ['View', 29], ['History', 43], ['Bookmarks', 67], ['Profiles', 45], ['Tab', 21], ['Window', 48], ['Help', 28]];

function TopBar() {
  return (
    <MenuBar>
      <FaApple size={16} />
      <Menus>
        <AppName><Fit w={50}>Chrome</Fit></AppName>
        {menus.map(([m, w]) => <Fit key={m} w={w}>{m}</Fit>)}
      </Menus>
      <Extras>
        <Extra $w={32}>
          <S w={15} vb="0 0 16 16"><circle cx="8" cy="8" r="4.200" strokeWidth="3" /><path d="M8 1.500V3M8 13V14.500M1.500 8H3M13 8H14.500M3.400 3.400 4.400 4.400M11.600 11.600 12.600 12.600M3.400 12.600 4.400 11.600M11.600 4.400 12.600 3.400" strokeWidth="2.600" /></S>
        </Extra>
        <Extra $w={34}>
          <S w={16} stroke="none"><circle cx="5.500" cy="5.500" r="5.200" fill="#777" /><circle cx="10.500" cy="10.500" r="5.200" fill="#777" /><circle cx="8" cy="8" r="7" fill="#777" /><text x="8" y="12.400" fontSize="12" fontWeight="700" textAnchor="middle" fill="#111" fontFamily={ui}>S</text></S>
        </Extra>
        <Extra $w={38}>
          <S w={25} h={12} sw={1}><rect x=".5" y=".5" width="21" height="11" rx="3" stroke="#aaa" /><rect x="2" y="2" width="18" height="8" rx="1.500" fill="#e8e8e8" stroke="none" /><path d="M24 4.500V7.500" stroke="#aaa" strokeWidth="1.500" /><path d="M13 0 7 6.500H10.500L9 12 15.500 5.300H12Z" fill="#fff" stroke="#000" strokeWidth="1.200" /></S>
        </Extra>
        <Extra $w={42}>
          <S w={17} h={13} sw={2}><path d="M1.200 4.500A10.500 10.500 0 0 1 15.800 4.500M4 7.500A6.500 6.500 0 0 1 13 7.500" strokeLinecap="butt" /><path d="M6.200 9.800A3.500 3.500 0 0 1 10.800 9.800L8.500 12.300Z" fill="currentColor" stroke="none" /></S>
        </Extra>
        <Extra $w={24}>
          <S w={14} sw={1.300}><circle cx="7" cy="7" r="6.300" /><circle cx="7" cy="5.400" r="2.300" fill="currentColor" stroke="none" /><path d="M3 11Q4 8.500 7 8.500T11 11Q7 13.500 3 11" fill="currentColor" stroke="none" /></S>
        </Extra>
        <Extra $w={40}><Search size={15} strokeWidth={2.300} /></Extra>
        <Extra $w={24}>
          <S w={14} sw={1.200}><rect x=".7" y=".9" width="12.600" height="5" rx="2.500" /><circle cx="3.300" cy="3.400" r="1.500" fill="currentColor" /><rect x=".7" y="8" width="12.600" height="5.300" rx="2.600" fill="currentColor" /><circle cx="10.700" cy="10.700" r="1.400" fill="#000" stroke="none" /></S>
        </Extra>
        <Extra $w={38}>
          <S w={14} stroke="none"><defs><linearGradient id="msi"><stop offset="0" stopColor="#e2357a" /><stop offset=".5" stopColor="#6a78d8" /><stop offset="1" stopColor="#1b99c4" /></linearGradient></defs><circle cx="7" cy="7" r="7" fill="url(#msi)" /><path d="M3 1.300A7 7 0 0 1 13.800 5.500L7 5Z" fill="#1f9a6b" /><circle cx="7.800" cy="7.800" r="2.600" fill="#fff" /></S>
        </Extra>
        <BarGap $w={4} />
        <Fit w={131}>Mon Sep 29  7:00 PM</Fit>
      </Extras>
    </MenuBar>
  );
}

function ChatPane() {
  return (
    <Chat>
      <ChatHead>
        <History size={16} strokeWidth={1.500} />
        <BarGap $w={38} />
        <Fit w={261}>Add instructions for installing a web pac...</Fit>
        <AgentPill>
          <S w={13} sw={1.100}><path d="M2 9.500 5.200 3.200 8 2.500M9.500 5.500 9.800 9 5.500 11.500 2 9.500M2 9.500 9.800 9M7 1.200 9.500 4.500M10 1.500 11.500 3.500M11 6 11.500 8" /></S>
          <Fit w={42}>Agent 3</Fit>
        </AgentPill>
        <S w={16} sw={1.150}><path d="M9 3H3.500Q1.500 3 1.500 5V14.500L4.500 12H12Q14 12 14 10V8.500M12.500 1.500V5.500M10.500 3.500H14.500" /></S>
      </ChatHead>
      <ChatScroll>
        <Para>
          <B><Fit w={52}>Fixed it!</Fit></B>
          <S w={18} stroke="none"><circle cx="8" cy="10" r="7.500" fill="#d8262c" /><circle cx="8" cy="10" r="5.600" fill="#f4dcdc" /><circle cx="8" cy="10" r="4.500" fill="#d8262c" /><circle cx="8" cy="10" r="2" fill="#f4dcdc" /><path d="M8 10 14 4" stroke="#555" /><path d="M12.500 5.500 12.500 2.500 15 .5V3L18 3.500 15.500 6Z" fill="#20a8c4" /></S>
          <Fit w={111}>Here's what I did:</Fit>
        </Para>
        <Para><Fit w={96}>Changes Made:</Fit></Para>
        <List>
          <Item><Marker>1.</Marker><Lines><Fit w={371}><B>Removed the blocker</B> (lines 1633-1638) that was rejecting</Fit><Fit w={189}>sellers without Stripe Connect</Fit></Lines></Item>
          <Item><Marker>2.</Marker><Fit w={275}><B>Made payment intent creation conditional</B>:</Fit></Item>
          <Item $deep><Marker $deep><Dot /></Marker><Fit w={369}>If seller has Connect <Arrow>→</Arrow> use their account with platform fee</Fit></Item>
          <Item $deep><Marker $deep><Dot /></Marker><Lines><Fit w={368}>If seller has NO Connect <Arrow>→</Arrow> use platform account (100% to</Fit><Fit w={27}>you)</Fit></Lines></Item>
          <Item><Marker>3.</Marker><Lines><Fit w={376}><B>Aligned with Buy Now flow</B> - both now handle non-Connect</Fit><Fit w={42}>sellers</Fit></Lines></Item>
        </List>
        <Para><Fit w={33}>Now:</Fit></Para>
        <List>
          <Item><Marker>1.</Marker><Fit w={116}><B>Republish</B> the app</Fit></Item>
          <Item><Marker>2.</Marker><Fit w={252}>Test checkout again in incognito window</Fit></Item>
          <Item><Marker>3.</Marker><Lines><Fit w={392}>The payment should now be created on your <B>platform account</B></Fit><Fit w={218}>since Artem Mortis has no Connect</Fit></Lines></Item>
        </List>
        <Para>
          <Fit w={140}>This should work now!</Fit>
          <S w={18} stroke="none"><path d="M6 6 1.500 7.500 1 11 5 10ZM12 12 10.500 16.500 7 17 8 13Z" fill="#c8322c" /><path d="M4 12 6 14 2 17.500 .5 17 1 15Z" fill="#fbb41a" /><path d="M4 11Q8 2 17.500 .5 16 10 7 14Z" fill="#8fa3b0" /><path d="M13 1.700 17.500.5 16.300 5Z" fill="#d83a34" /><circle cx="11.500" cy="6.500" r="2" fill="#2f4d63" /><path d="M4 11 7 14 5.500 15 3 12.500Z" fill="#e23f2c" /></S>
        </Para>
        <Card>
          <CardTop>
            <S w={16} sw={1.200} stroke="#1c8a2a"><circle cx="8" cy="8" r="6.900" /><path d="M5 8.200 7.200 10.200 11 6" /></S>
            <Inline $gap={4}><Fit w={94}>Checkpoint made</Fit><Fit w={76}>9 minutes ago</Fit></Inline>
          </CardTop>
          <Lines><Fit w={409}>Allow purchases even if sellers haven't completed Stripe Connect</Fit><Fit w={35}>setup</Fit></Lines>
          <CardActions>
            <SmallButton $w={108}><History size={12} strokeWidth={1.700} /><Fit w={74}>Rollback here</Fit></SmallButton>
            <SmallButton $w={80}><Code size={12} strokeWidth={1.700} /><Fit w={46}>Changes</Fit></SmallButton>
            <SmallButton $w={76}><S w={12} sw={1}><circle cx="6" cy="6" r="5.300" strokeDasharray="1 2.330" /><path d="M5 4 8 6 5 8Z" fill="currentColor" stroke="none" /></S><Fit w={43}>Preview</Fit></SmallButton>
          </CardActions>
        </Card>
        <Card>
          <CardTop $flat>
            <Inline $gap={8}><S w={16} sw={1.200}><circle cx="8" cy="10" r="6.900" /><path d="M7 12.500 11 8.500M8.500 8.500H11V11" /></S><Fit w={91}>1 minute of work</Fit></Inline>
            <ChevronDown size={14} strokeWidth={1.600} />
          </CardTop>
          <CardTop $flat />
        </Card>
      </ChatScroll>
      <Composer>
        <Prompt><Fit w={124}>Make, test, iterate...</Fit></Prompt>
        <ComposerRow>
          <BuildButton><BoxIcon size={15} strokeWidth={1.500} /><Fit w={28}>Build</Fit><PushRight><ChevronUp size={11} strokeWidth={2} /></PushRight></BuildButton>
          <S w={15} sw={1.300}><path d="M1 1H14V7M1 1V14H7" strokeDasharray=".8 2.450" /><path d="M7.500 7.500 14 9.500 11 11 10 14Z" /></S>
          <BarGap $w={13} />
          <Paperclip size={15} strokeWidth={1.500} />
          <PushRight />
          <S w={14} sw={1.200}><path d="M0 4H4M9 4H14M0 10H7M12 10H14" /><circle cx="6.500" cy="4" r="2" /><circle cx="9.500" cy="10" r="2" /></S>
          <BarGap $w={17} />
          <ArrowUp size={16} strokeWidth={1.500} />
        </ComposerRow>
      </Composer>
    </Chat>
  );
}

function OverviewPane() {
  return (
    <Pane>
      <PaneTabs><PaneTab><DeployGlyph w={13} /><Fit w={59}>Overview</Fit></PaneTab></PaneTabs>
      <PaneBody>
        <Rail><RailRing /><RailLine $dash /><RailDot /><RailLine /></Rail>
        <PaneCol>
          <ActionCard><DeployGlyph /><Fit w={63}>Republish</Fit></ActionCard>
          <ActionCard><S w={14} h={16} sw={1.200}><path d="M7 1V6.500M3.500 4 7 .8 10.500 4M7 9.500V15.200M3.500 12 7 15.200 10.500 12" /></S><Fit w={116}>Advanced settings</Fit></ActionCard>
          <ActionCard><S w={14} sw={1.100}><path d="M1.500 4.500V3Q1.500 1.500 3 1.500H11Q12.500 1.500 12.500 3V11Q12.500 12.500 11 12.500H7.500M1 13 9 5M4.500 4.800H9.200V9.500" /></S><Fit w={110}>Run security scan</Fit></ActionCard>
          <ProdCard>
            <ProdRow $big><Fit w={79}>Production</Fit></ProdRow>
            <ProdRow $dim $mt={8}><Fit w={40}>Status</Fit></ProdRow>
            <ProdRow $mt={1} $gap={4}><Online /><B><Fit w={29}>Matt</Fit></B><Fit w={62}>published</Fit></ProdRow>
            <ProdRow $dim $mt={9}><Fit w={53}>Visibility</Fit></ProdRow>
            <ProdRow $gap={4}><Globe size={16} strokeWidth={1.600} /><Fit w={39}>Public</Fit></ProdRow>
            <ProdRow $dim $mt={8}><Fit w={48}>Domain</Fit></ProdRow>
            <ProdRow $mt={1}><Fit w={176}>https://curiosities.replit.app</Fit></ProdRow>
            <ProdRow $mt={4}><Fit w={199}>https://www.curiosities.market</Fit></ProdRow>
            <ProdRow $mt={4}><Fit w={77}>https://cur...</Fit></ProdRow>
            <BuyButton><Plus size={11} strokeWidth={1.800} /><Fit w={99}>Buy a new domain</Fit></BuyButton>
            <ProdRow $dim $mt={8}><Fit w={30}>Type</Fit></ProdRow>
            <ProdRow><Fit w={62}>Autoscale</Fit></ProdRow>
            <ProdRow $dim $mt={6}><Fit w={102}>(4 vCPU / 8 GiB)</Fit></ProdRow>
            <ProdRow $link $mt={6} $gap={6}><Fit w={49}>Manage</Fit><Fit w={60}>See usage</Fit></ProdRow>
            <ProdRow $dim $mt={8}><Fit w={60}>Database</Fit></ProdRow>
            <ProdRow><Fit w={129}>Production database</Fit></ProdRow>
            <ProdRow $link $mt={5}><Fit w={49}>Manage</Fit></ProdRow>
            <Notice>Your production database<br />is ready! You can now<br />save and manage data</Notice>
          </ProdCard>
        </PaneCol>
      </PaneBody>
    </Pane>
  );
}

function Safari() {
  return (
    <SafariWindow>
      <SafariBar>
        <Lights>{[0, 1, 2].map((i) => <Light key={i} $c="#c9c9c9" $b="#b0b0b0" />)}</Lights>
        <BarGap $w={26} />
        <S w={19} h={15} sw={1.300}><rect x=".7" y=".7" width="17.600" height="13.600" rx="2" /><path d="M6.500 1V14M2.800 4H4.300M2.800 6.500H4.300M2.800 9H4.300" /></S>
        <BarGap $w={8} /><BarDivider /><BarGap $w={5} />
        <ChevronDown size={11} strokeWidth={3} />
        <BarGap $w={16} /><ChevronLeft size={22} strokeWidth={1.700} />
        <BarGap $w={14} /><ChevronRight size={22} strokeWidth={1.600} color="#c4c4c4" />
        <BarGap $w={22} />
        <SafariUrl>
          <S w={11} h={12} sw={1.300} stroke="#858585"><rect x="1.500" y="5.500" width="8" height="6" rx="1" fill="#858585" /><path d="M3 5.500V3.200A2.500 2.500 0 0 1 8 3.200V5.500" /></S>
          <Fit w={61}>replit.com</Fit>
          <PushRight><S w={12} h={14} sw={1.100} stroke="#777"><path d="M7 3A5 5 0 1 0 11 8M5.500.8 8 3 5.500 5.500" /></S></PushRight>
        </SafariUrl>
        <BarGap $w={90} />
        <S w={14} h={18} sw={1.100}><path d="M7 11V1M3.500 4 7 .8 10.500 4M4 7H1.500V17H12.500V7H10" /></S>
        <BarGap $w={22} /><S w={16} sw={1.200}><path d="M8 1V15M1 8H15" /></S>
        <BarGap $w={21} /><S w={17} sw={1.200}><rect x=".6" y="-1" width="12" height="12" rx="2" /><rect x="4" y="2.500" width="12" height="12" rx="2" /></S>
      </SafariBar>
      <ReplitHeader>
        <S w={13} h={16} stroke="none"><rect x="1" y="2" width="5" height="4.500" rx="1" fill="#0c0d10" /><rect x="6" y="6.500" width="5" height="4.500" rx="1" fill="#0c0d10" /><rect x="1" y="11" width="5" height="4" rx="1" fill="#0c0d10" /><circle cx="10" cy="1.500" r="3" fill="#ff2a33" /></S>
        <BarGap $w={4} />
        <ChevronDown size={10} strokeWidth={2.300} color="#555" />
        <AppBadge><S w={12} stroke="#7a68b8" sw={.9}><ellipse cx="6" cy="6" rx="2.500" ry="5" transform="rotate(35 6 6)" fill="#34285e" /><path d="M4 9.500 8.500 3" /></S></AppBadge>
        <Fit w={77}>CurioMarket</Fit>
        <BarGap $w={15} />
        <PurpleChip />
        <BarGap $w={279} />
        <S w={65} h={28} sw={1.200}>
          <rect x="48" y="0" width="6" height="28" rx="3" fill="#ececec" stroke="none" />
          <path d="M0 8H5M4 10 6 13 4 15H0V18M2 20H5" stroke="#8a8d92" /><path d="M11 12 14.500 14.500 12 17" stroke="#bbb" /><path d="M11 18.500H15" stroke="#8c7a37" />
          <path d="M22 10.500 24.500 14 22 17.500" stroke="#1760b8" /><path d="M29.500 8H34.500V20H29.500M29.500 12H34.500M29.500 16H34.500" stroke="#1760b8" /><path d="M39 8H42V11L40 13H42.500L43.500 15V18L39.500 20.500" stroke="#8a8d92" />
          <path d="M48.500 7V21M49 8Q54 9 53.500 13.500T49 17M49 12.500H53.500" stroke="#1e7d28" strokeWidth="1.600" /><path d="M57 8 62.500 12 61 17 57.500 20.500 58.500 12Z" stroke="#1b4f9c" />
        </S>
        <BarGap $w={8} />
        <Plus size={16} strokeWidth={1.500} color="#666a71" />
      </ReplitHeader>
      <Panes><ChatPane /><OverviewPane /></Panes>
    </SafariWindow>
  );
}

function Chrome() {
  return (
    <ChromeWindow>
      <ChromeClip>
        <TabStrip>
          <Lights><Light $c="#ff4b44" /><Light $c="#ffbe05" /><Light $c="#08d233" /></Lights>
          <Tab>
            <S w={14} stroke="none"><circle cx="7" cy="7" r="7" fill="#5f6368" /><path d="M2 5Q5 4 6.500 6.500T10 9.500 8 12.500 5.500 10 2 8ZM8 1.500Q7 4 10 4.500T12.500 8Q14 4 8 1.500" fill="#33363a" /></S>
            <Fit w={156}>curiosities.market/checkout</Fit>
            <PushRight><X size={12} strokeWidth={2.600} /></PushRight>
          </Tab>
          <Plus size={14} strokeWidth={2.400} color="#c7c7c7" />
        </TabStrip>
        <ToolbarWrap>
          <Toolbar>
            <Nav><MdArrowBack size={18} /><MdArrowForward size={18} color="#777" /><MdRefresh size={18} /></Nav>
            <Omnibox>
              <SiteInfo><S w={13} h={12} sw={1.500}><circle cx="2.800" cy="2.800" r="1.800" /><path d="M7.500 2.800H12M1 9.300H5.500" /><circle cx="10.200" cy="9.300" r="1.800" /></S></SiteInfo>
              <UrlText><Fit w={182}>curiosities.market<UrlPath>/checkout</UrlPath></Fit></UrlText>
              <OmniActions><MdOutlineVisibilityOff size={20} /><MdStarBorder size={20} /></OmniActions>
            </Omnibox>
            <BarGap $w={17} />
            <S w={18} h={16} sw={1.700}><path d="M7 14H2.500Q1 14 1 12.500V2.500Q1 1 2.500 1H16V5" /><path d="M9 1H17V5H9Z" fill="currentColor" stroke="none" /><circle cx="12.500" cy="10" r="3" /><path d="M15 12.500 17.300 15" /></S>
            <Separator />
            <Incognito>
              <S w={16} h={15} sw={1.400}><path d="M1 6.700H15M3.800 6 5.300 1.300 8 2 10.700 1.300 12.200 6" /><circle cx="4.800" cy="11" r="2.300" /><circle cx="11.200" cy="11" r="2.300" /><path d="M7 10.500H9" /></S>
              <Fit w={57}>Incognito</Fit>
            </Incognito>
            <MdMoreVert size={20} />
          </Toolbar>
        </ToolbarWrap>
        <Page>
          <Checkout>
            <Panel $cut>
              <FieldEnd />
              <FieldGrid>
                <div><FieldLabel><Fit w={38}>City *</Fit></FieldLabel><FieldBox><Fit w={69}>hollywood</Fit></FieldBox></div>
                <div><FieldLabel><Fit w={46}>State *</Fit></FieldLabel><FieldBox>fl</FieldBox></div>
              </FieldGrid>
              <FieldLabel><Fit w={91}>Postal Code *</Fit></FieldLabel>
              <FieldBox><Fit w={44}>33024</Fit></FieldBox>
            </Panel>
            <Panel>
              <PanelTitle><Fit w={188}>Payment Progress</Fit></PanelTitle>
              <PanelSub><Fit w={214}>Processing payments for 1 seller</Fit></PanelSub>
              <SellerRow>
                <CircleX size={16} color="#dc0000" strokeWidth={2} />
                <Fit w={55}>Seller 1</Fit>
                <Failed><Fit w={35}>Failed</Fit></Failed>
                <Amount><Fit w={37}>$1.00</Fit></Amount>
              </SellerRow>
              <ErrorText><Fit w={515}>{`500: {"error":"No such payment_intent: 'pi_3SCq2YPwdZa7KmUd0JpcUXlk'"}`}</Fit></ErrorText>
            </Panel>
            <Pay><Fit w={164}>Complete Payment</Fit></Pay>
          </Checkout>
          <Footer>
            <div>
              <Brand>
                <Swash $pull={-5}>C</Swash><BrandRest><Fit w={48}>urio</Fit></BrandRest>
                <Swash $pull={3} $push={7}>M</Swash><BrandRest><Fit w={65}>arket</Fit></BrandRest>
              </Brand>
              <Blurb><Fit w={321}>The independent marketplace for oddities,</Fit><Fit w={344}>curios, and specimens. Built by collectors, for</Fit><Fit w={79}>collectors.</Fit></Blurb>
            </div>
            <div>
              <FootHead><Fit w={43}>Shop</Fit></FootHead>
              <FootLink><Fit w={94}>All Categories</Fit></FootLink><FootLink><Fit w={52}>Antique</Fit></FootLink><FootLink><Fit w={50}>Funeral</Fit></FootLink>
            </div>
            <div>
              <FootHead><Fit w={68}>Support</Fit></FootHead>
              <FootLink><Fit w={80}>Help Center</Fit></FootLink><FootLink><Fit w={81}>Seller Guide</Fit></FootLink><FootLink><Fit w={118}>Safety Guidelines</Fit></FootLink>
            </div>
          </Footer>
        </Page>
      </ChromeClip>
      <ChromeEdge />
    </ChromeWindow>
  );
}

const labels = [['Shirt', 103, 10], ['Shirts', 215, 19], ['2025', 327, 29], ['tae', 440, 21], ['n', 552, 38], ['tion', 664, 21], ['me', 776, 27]];

export default function App() {
  return (
    <Desktop>
      <Global />
      <TopBar />
      <Thumb />
      <DesktopItem $y={41} $r={158}><Folder /></DesktopItem>
      {[41, 153, 265, 377, 489, 601, 713].map((y) => <DesktopItem key={y} $y={y} $r={36}><Folder /></DesktopItem>)}
      {labels.map(([t, y, r]) => <DesktopLabel key={y} $y={y} $r={r}>{t}</DesktopLabel>)}
      <Safari />
      <Chrome />
      <Dock>
        {dockApps.map((a, i) => {
          if (!a) return <DockDivider key={i} />;
          const [Icon, on, badge] = a;
          return <DockItem key={i}><Icon />{on ? <Running /> : null}{badge ? <DockBadge>{badge}</DockBadge> : null}</DockItem>;
        })}
      </Dock>
    </Desktop>
  );
}
